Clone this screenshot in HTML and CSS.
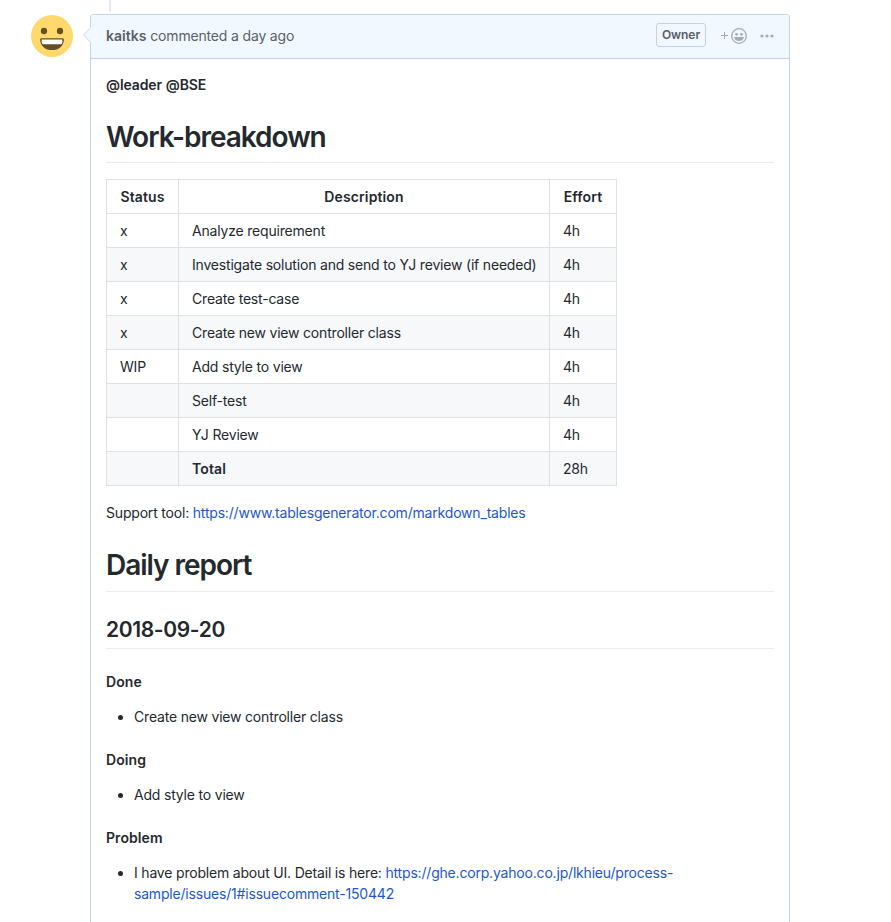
FILE: index.html
```html
<!DOCTYPE html>
<html lang="en">
<head>
<meta charset="utf-8">
<title>Issue comment</title>
<link rel="stylesheet" href="styles.css">
</head>
<body>
<main class="thread">
  <svg class="avatar" viewBox="0 0 42 42" aria-hidden="true">
    <circle cx="21" cy="21" r="21" fill="#ffd96b"/>
    <ellipse cx="13" cy="16" rx="3.1" ry="3.3" fill="#664e27"/>
    <ellipse cx="29" cy="16" rx="3.1" ry="3.3" fill="#664e27"/>
    <path d="M10.4 23.2H31.6Q33 23.2 32.9 24.7C32.4 31.6 27.5 35.1 21 35.1S9.6 31.6 9.1 24.7Q9 23.2 10.4 23.2Z" fill="#664e27"/>
    <path d="M10.7 24.6H31.3V27.4Q31.1 29.3 29.3 29.3H12.7Q10.9 29.3 10.7 27.4Z" fill="#fff"/>
  </svg>
  <article class="comment">
    <svg class="caret" viewBox="0 0 8 16" aria-hidden="true"><path d="M8 0L.7 8L8 16Z" fill="#f1f8ff"/><path d="M7.5 .7L.7 8L7.5 15.3" fill="none" stroke="#c8d8ee"/></svg>
    <header class="comment-header">
      <div class="byline"><strong>kaitks</strong> commented a day ago</div>
      <div class="actions">
        <span class="owner">Owner</span>
        <svg class="react" viewBox="0 0 27 18" aria-label="Add reaction">
          <path d="M1 8.5H8M4.5 5V12" stroke="#a5abb2" fill="none"/>
          <circle cx="19" cy="9" r="7.3" fill="none" stroke="#a5abb2" stroke-width="1.3"/>
          <circle cx="16.5" cy="7.3" r="1.4" fill="#a5abb2"/>
          <circle cx="21.5" cy="7.3" r="1.4" fill="#a5abb2"/>
          <path d="M14 10H24C23.5 12.8 21.6 14 19 14S14.5 12.8 14 10Z" fill="#a5abb2"/>
        </svg>
        <svg class="more" viewBox="0 0 14 4" aria-label="More"><circle cx="2" cy="2" r="1.6"/><circle cx="7" cy="2" r="1.6"/><circle cx="12" cy="2" r="1.6"/></svg>
      </div>
    </header>
    <div class="markdown">
      <p class="mentions"><strong>@leader</strong> <strong>@BSE</strong></p>
      <h1>Work-breakdown</h1>
      <table>
        <colgroup><col class="col-status"><col class="col-description"><col class="col-effort"></colgroup>
        <thead><tr><th>Status</th><th>Description</th><th>Effort</th></tr></thead>
        <tbody>
          <tr><td>x</td><td>Analyze requirement</td><td>4h</td></tr>
          <tr><td>x</td><td>Investigate solution and send to YJ review (if needed)</td><td>4h</td></tr>
          <tr><td>x</td><td>Create test-case</td><td>4h</td></tr>
          <tr><td>x</td><td>Create new view controller class</td><td>4h</td></tr>
          <tr><td>WIP</td><td>Add style to view</td><td>4h</td></tr>
          <tr><td></td><td>Self-test</td><td>4h</td></tr>
          <tr><td></td><td>YJ Review</td><td>4h</td></tr>
          <tr><td></td><td><strong>Total</strong></td><td>28h</td></tr>
        </tbody>
      </table>
      <p>Support tool: <a href="#">https://www.tablesgenerator.com/markdown_tables</a></p>
      <h1>Daily report</h1>
      <h2>2018-09-20</h2>
      <h4>Done</h4>
      <ul><li>Create new view controller class</li></ul>
      <h4>Doing</h4>
      <ul><li>Add style to view</li></ul>
      <h4>Problem</h4>
      <ul><li>I have problem about UI. Detail is here: <a href="#">https://ghe.corp.yahoo.co.jp/lkhieu/process-<wbr>sample/issues/1#issuecomment-150442</a></li></ul>
    </div>
  </article>
</main>
</body>
</html>
```
FILE: styles.css
```css
* { box-sizing: border-box; }
html { overflow: hidden; }
body {
  margin: 0;
  height: 922px;
  overflow: hidden;
  background: #fff;
  color: #24292e;
  font: 14px/21px Inter, "Liberation Sans", sans-serif;
  letter-spacing: -0.19px;
}
.thread {
  position: relative;
  display: flex;
  align-items: flex-start;
  gap: 17px;
  padding: 14px 0 0 31px;
}
.thread::before {
  content: "";
  position: absolute;
  left: 109px;
  top: 0;
  width: 2px;
  height: 12px;
  background: #e6ebf1;
}
.avatar { width: 42px; height: 42px; margin-top: 1px; }
.comment {
  position: relative;
  width: 700px;
  height: 940px;
  border: 1px solid #c0d3eb;
  border-radius: 3px;
}
.caret { position: absolute; left: -8px; top: 12px; width: 8px; height: 16px; }
.comment-header {
  display: flex;
  justify-content: space-between;
  height: 44px;
  padding: 0 15px 0 15px;
  background: #f1f8ff;
  border-bottom: 1px solid #c0d3eb;
  border-radius: 2px 2px 0 0;
  color: #586069;
}
.byline { line-height: 41px; letter-spacing: -0.17px; }
.byline strong { letter-spacing: 0.03px; }
.actions { display: flex; align-items: flex-start; }
.owner {
  width: 50px;
  height: 24px;
  margin: 8px 14px 0 0;
  border: 1px solid #c0d3eb;
  border-radius: 3px;
  font-size: 12px;
  font-weight: 600;
  line-height: 22px;
  letter-spacing: -0.05px;
  text-align: center;
}
.react { width: 27px; height: 18px; margin: 12px 13px 0 0; }
.more { width: 14px; height: 4px; margin-top: 19px; fill: #a5abb2; }
strong { font-weight: 600; }
.mentions { letter-spacing: -0.12px; }
.mentions strong { letter-spacing: -0.1px; }
.markdown { padding: 15px; }
p, table, ul { margin: 0 0 16px; }
h1, h2, h4 { margin: 24px 0 16px; font-weight: 600; line-height: 1.25; }
h1, h2 { border-bottom: 1px solid #eaecef; }
h1 { padding: 1px 0 7.4px; font-size: 28px; letter-spacing: -1.03px; }
h2 { padding: 1px 0 5.3px; font-size: 21px; letter-spacing: -0.35px; }
h4 { font-size: 14px; line-height: 17px; letter-spacing: 0.08px; }
table { table-layout: fixed; width: 511px; border-collapse: collapse; }
.col-status { width: 72px; }
.col-description { width: 371px; }
.col-effort { width: 67px; }
th, td {
  height: 34px;
  padding: 6px 13px;
  border: 1px solid #dfe2e5;
  text-align: left;
  white-space: nowrap;
}
th { font-weight: 600; text-align: center; letter-spacing: 0.12px; }
td strong { letter-spacing: 0.12px; }
tbody tr:nth-child(even) { background: #f6f8fa; }
a { color: #1b58cf; text-decoration: none; }
ul { padding-left: 28px; }
```
